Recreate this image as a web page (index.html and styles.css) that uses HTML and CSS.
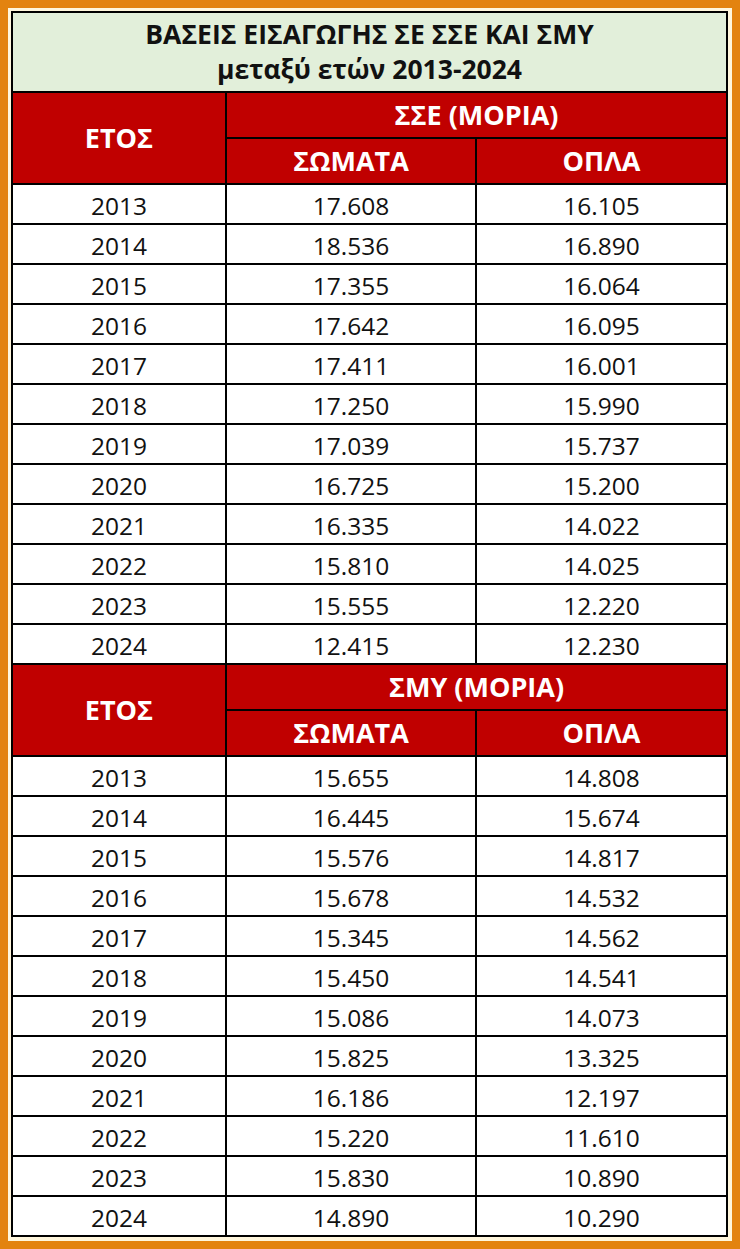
FILE: index.html
```html
<!DOCTYPE html>
<html lang="el">
<head>
<meta charset="utf-8">
<title>Βάσεις εισαγωγής ΣΣΕ και ΣΜΥ 2013-2024</title>
<link rel="stylesheet" href="styles.css">
</head>
<body>
<div class="frame">
<table class="scores">
  <colgroup>
    <col class="c-year">
    <col class="c-val">
    <col class="c-val2">
  </colgroup>
  <thead>
    <tr class="title-row">
      <th colspan="3" class="title">ΒΑΣΕΙΣ ΕΙΣΑΓΩΓΗΣ ΣΕ ΣΣΕ ΚΑΙ ΣΜΥ<br>μεταξύ ετών 2013-2024</th>
    </tr>
  </thead>
  <tbody>
    <tr class="hdr">
      <th rowspan="2" class="red">ΕΤΟΣ</th>
      <th colspan="2" class="red">ΣΣΕ (ΜΟΡΙΑ)</th>
    </tr>
    <tr class="hdr">
      <th class="red">ΣΩΜΑΤΑ</th>
      <th class="red">ΟΠΛΑ</th>
    </tr>
    <tr><td>2013</td><td>17.608</td><td>16.105</td></tr>
    <tr><td>2014</td><td>18.536</td><td>16.890</td></tr>
    <tr><td>2015</td><td>17.355</td><td>16.064</td></tr>
    <tr><td>2016</td><td>17.642</td><td>16.095</td></tr>
    <tr><td>2017</td><td>17.411</td><td>16.001</td></tr>
    <tr><td>2018</td><td>17.250</td><td>15.990</td></tr>
    <tr><td>2019</td><td>17.039</td><td>15.737</td></tr>
    <tr><td>2020</td><td>16.725</td><td>15.200</td></tr>
    <tr><td>2021</td><td>16.335</td><td>14.022</td></tr>
    <tr><td>2022</td><td>15.810</td><td>14.025</td></tr>
    <tr><td>2023</td><td>15.555</td><td>12.220</td></tr>
    <tr><td>2024</td><td>12.415</td><td>12.230</td></tr>
    <tr class="hdr">
      <th rowspan="2" class="red">ΕΤΟΣ</th>
      <th colspan="2" class="red">ΣΜΥ (ΜΟΡΙΑ)</th>
    </tr>
    <tr class="hdr">
      <th class="red">ΣΩΜΑΤΑ</th>
      <th class="red">ΟΠΛΑ</th>
    </tr>
    <tr><td>2013</td><td>15.655</td><td>14.808</td></tr>
    <tr><td>2014</td><td>16.445</td><td>15.674</td></tr>
    <tr><td>2015</td><td>15.576</td><td>14.817</td></tr>
    <tr><td>2016</td><td>15.678</td><td>14.532</td></tr>
    <tr><td>2017</td><td>15.345</td><td>14.562</td></tr>
    <tr><td>2018</td><td>15.450</td><td>14.541</td></tr>
    <tr><td>2019</td><td>15.086</td><td>14.073</td></tr>
    <tr><td>2020</td><td>15.825</td><td>13.325</td></tr>
    <tr><td>2021</td><td>16.186</td><td>12.197</td></tr>
    <tr><td>2022</td><td>15.220</td><td>11.610</td></tr>
    <tr><td>2023</td><td>15.830</td><td>10.890</td></tr>
    <tr><td>2024</td><td>14.890</td><td>10.290</td></tr>
  </tbody>
</table>
</div>
</body>
</html>
```

FILE: styles.css
```css
html, body {
  margin: 0;
  padding: 0;
}
body {
  background: #e3830f;
  padding: 8px;
  width: 740px;
  height: 1249px;
  box-sizing: border-box;
  font-family: "Open Sans", "Noto Sans", "DejaVu Sans", sans-serif;
}
.frame {
  background: #fff6dc;
  padding: 3px 4px 4px 3px;
  width: 724px;
  height: 1233px;
  box-sizing: border-box;
}
.scores {
  border-collapse: separate;
  border-spacing: 0;
  table-layout: fixed;
  width: 717px;
  border-top: 2px solid #000;
  border-left: 2px solid #000;
  background: #fff;
}
.c-year { width: 214px; }
.c-val { width: 250px; }
.c-val2 { width: 251px; }
.scores th,
.scores td {
  box-sizing: border-box;
  border-right: 2px solid #000;
  border-bottom: 2px solid #000;
  padding: 0;
  text-align: center;
  vertical-align: middle;
}
.scores td {
  height: 40px;
  font-size: 24.5px;
  line-height: 30px;
  color: #111;
  padding-top: 4px;
}
.title {
  height: 80px;
  background: #e2efda;
  color: #111;
  font-weight: 700;
  font-size: 26.5px;
  line-height: 35px;
  padding-top: 2px;
}
.hdr th {
  height: 46px;
}
.red {
  background: #c00000;
  color: #fff;
  font-weight: 700;
  font-size: 27px;
  line-height: 30px;
  padding-top: 2px;
}
```
